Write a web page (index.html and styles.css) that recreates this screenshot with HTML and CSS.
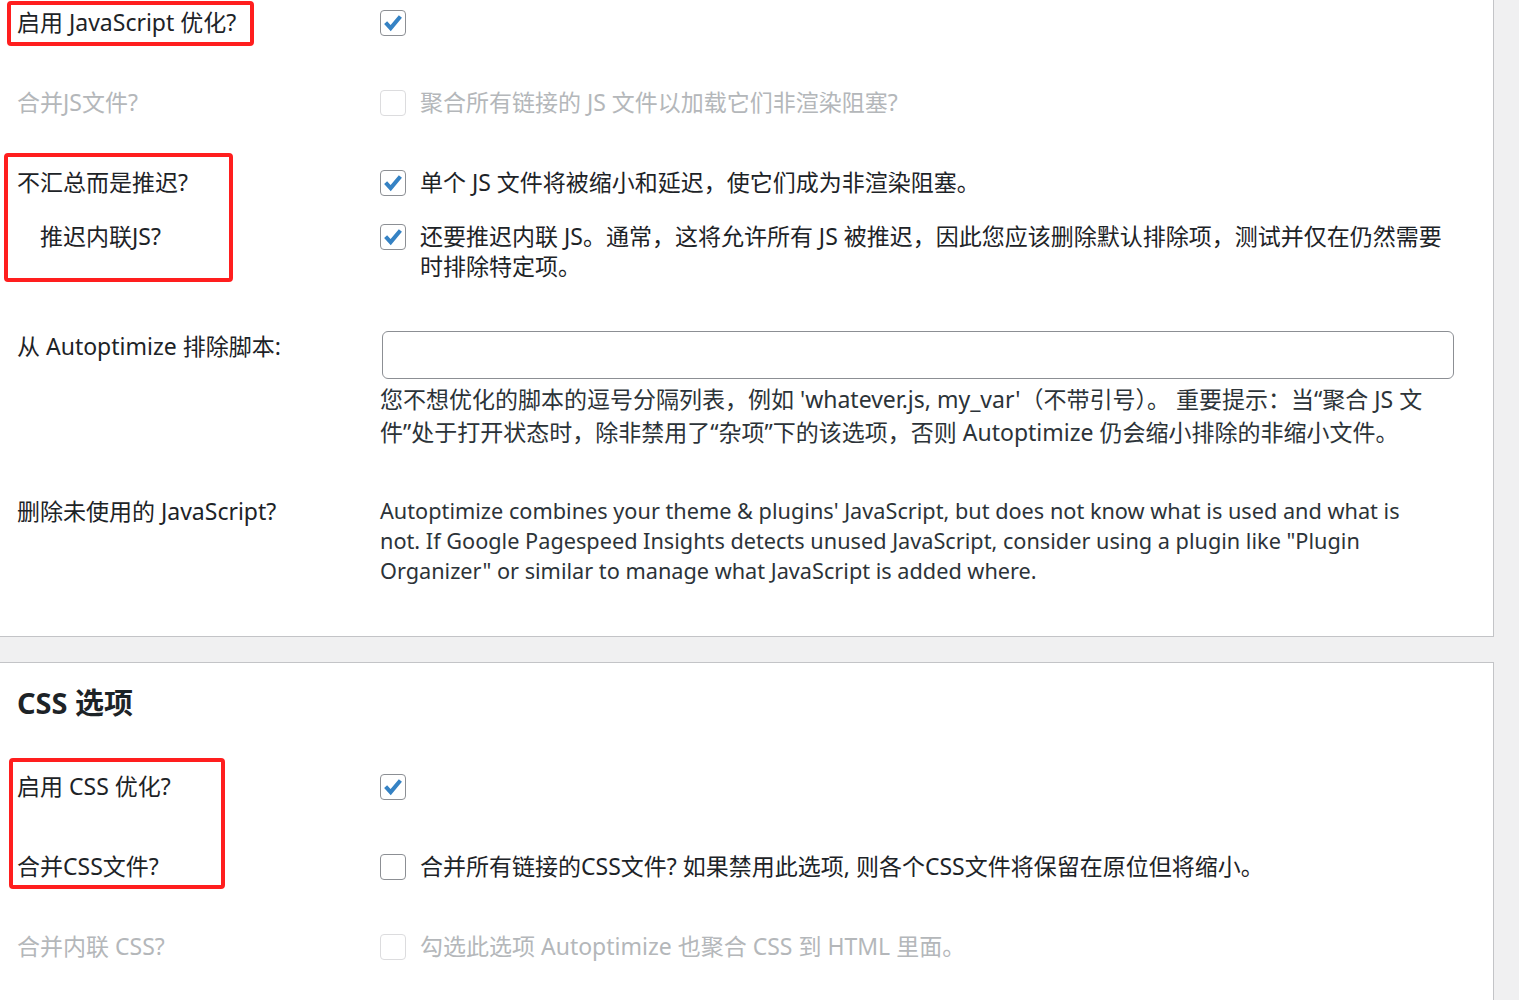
FILE: index.html
```html
<!DOCTYPE html>
<html lang="zh-CN">
<head>
<meta charset="utf-8">
<title>Autoptimize 设置</title>
<link rel="stylesheet" href="styles.css">
</head>
<body>
<div class="page">
  <section class="panel panel-js">
    <div class="row">
      <div class="label">启用 JavaScript 优化?</div>
      <div class="field">
        <span class="cb checked"><svg viewBox="0 0 26 26" width="26" height="26"><polyline points="5,12.5 10.5,18.5 21,6" /></svg></span>
      </div>
    </div>
    <div class="row disabled">
      <div class="label">合并JS文件?</div>
      <div class="field">
        <span class="cb"></span>
        <span class="cb-text">聚合所有链接的 JS 文件以加载它们非渲染阻塞?</span>
      </div>
    </div>
    <div class="row">
      <div class="label">不汇总而是推迟?</div>
      <div class="field">
        <span class="cb checked"><svg viewBox="0 0 26 26" width="26" height="26"><polyline points="5,12.5 10.5,18.5 21,6" /></svg></span>
        <span class="cb-text">单个 JS 文件将被缩小和延迟，使它们成为非渲染阻塞。</span>
      </div>
    </div>
    <div class="row sub">
      <div class="label indent">推迟内联JS?</div>
      <div class="field">
        <span class="cb checked"><svg viewBox="0 0 26 26" width="26" height="26"><polyline points="5,12.5 10.5,18.5 21,6" /></svg></span>
        <span class="cb-text">还要推迟内联 JS。通常，这将允许所有 JS 被推迟，因此您应该删除默认排除项，测试并仅在仍然需要<br>时排除特定项。</span>
      </div>
    </div>
    <div class="row">
      <div class="label">从 Autoptimize 排除脚本:</div>
      <div class="field column">
        <input class="text-input" type="text" value="">
        <p class="desc">您不想优化的脚本的逗号分隔列表，例如 'whatever.js, my_var'（不带引号）。 重要提示：当“聚合 JS 文<br>件”处于打开状态时，除非禁用了“杂项”下的该选项，否则 Autoptimize 仍会缩小排除的非缩小文件。</p>
      </div>
    </div>
    <div class="row after-desc">
      <div class="label">删除未使用的 JavaScript?</div>
      <div class="field">
        <p class="note">Autoptimize combines your theme &amp; plugins' JavaScript, but does not know what is used and what is<br>not. If Google Pagespeed Insights detects unused JavaScript, consider using a plugin like "Plugin<br>Organizer" or similar to manage what JavaScript is added where.</p>
      </div>
    </div>

    <div class="mark mark-1"></div>
    <div class="mark mark-2"></div>
  </section>

  <section class="panel panel-css">
    <h2 class="section-title">CSS 选项</h2>
    <div class="row first">
      <div class="label">启用 CSS 优化?</div>
      <div class="field">
        <span class="cb checked"><svg viewBox="0 0 26 26" width="26" height="26"><polyline points="5,12.5 10.5,18.5 21,6" /></svg></span>
      </div>
    </div>
    <div class="row">
      <div class="label">合并CSS文件?</div>
      <div class="field">
        <span class="cb"></span>
        <span class="cb-text">合并所有链接的CSS文件? 如果禁用此选项, 则各个CSS文件将保留在原位但将缩小。</span>
      </div>
    </div>
    <div class="row disabled">
      <div class="label">合并内联 CSS?</div>
      <div class="field">
        <span class="cb"></span>
        <span class="cb-text">勾选此选项 Autoptimize 也聚合 CSS 到 HTML 里面。</span>
      </div>
    </div>

    <div class="mark mark-3"></div>
  </section>
</div>
</body>
</html>
```

FILE: styles.css
```css
html, body {
  margin: 0;
  padding: 0;
}

body {
  background: #f0f0f1;
  font-family: "Noto Sans", "Noto Sans CJK SC", sans-serif;
  font-size: 23px;
  line-height: 30px;
  color: #1d2327;
}

.page {
  width: 1494px;
}

.panel {
  position: relative;
  background: #fff;
  border-right: 1px solid #c3c4c7;
  padding: 0 39px 0 17px;
}

.panel-js {
  padding-top: 7px;
  padding-bottom: 50px;
  border-bottom: 1px solid #c3c4c7;
}

.panel-css {
  margin-top: 25px;
  border-top: 1px solid #c3c4c7;
  padding-top: 20px;
  padding-bottom: 40px;
}

.row {
  display: grid;
  grid-template-columns: 363px 1fr;
}

.row + .row {
  margin-top: 50px;
}

.row.sub {
  margin-top: 24px;
}

.row.after-desc {
  margin-top: 47px;
}

.row.first {
  margin-top: 48px;
}

.label {
  white-space: nowrap;
}

.label.indent {
  padding-left: 23px;
}

.field {
  display: flex;
  align-items: flex-start;
  min-width: 0;
}

.field.column {
  flex-direction: column;
  align-items: stretch;
}

.cb {
  flex: none;
  width: 26px;
  height: 26px;
  margin-top: 3px;
  box-sizing: border-box;
  border: 1px solid #8c8f94;
  border-radius: 4px;
  background: #fff;
  display: flex;
  align-items: center;
  justify-content: center;
}

.cb svg {
  display: block;
  fill: none;
  stroke: #3582c4;
  stroke-width: 4.4;
  stroke-linejoin: miter;
  stroke-linecap: butt;
}

.cb-text {
  margin-left: 14px;
  white-space: nowrap;
}

.disabled .label,
.disabled .cb-text {
  color: #b4b7ba;
}

.disabled .cb {
  border-color: #dcdcde;
}

.text-input {
  display: block;
  box-sizing: border-box;
  margin: 0 0 0 2px;
  width: calc(100% - 2px);
  height: 48px;
  border: 1px solid #8c8f94;
  border-radius: 6px;
  background: #fff;
  font: inherit;
  padding: 0 12px;
  outline: none;
}

.desc {
  margin: 4px 0 0;
  line-height: 33px;
  color: #2c3338;
  white-space: nowrap;
}

.note {
  margin: 0;
  font-size: 21.7px;
  color: #2c3338;
  white-space: nowrap;
}

.section-title {
  margin: 0;
  font-size: 29px;
  line-height: 40px;
  font-weight: 700;
  color: #1d2327;
}

.mark {
  position: absolute;
  box-sizing: border-box;
  border: 4px solid #ff1e1e;
  border-radius: 4px;
  pointer-events: none;
}

.mark-1 {
  left: 7px;
  top: 1px;
  width: 247px;
  height: 45px;
}

.mark-2 {
  left: 4px;
  top: 153px;
  width: 229px;
  height: 129px;
}

.mark-3 {
  left: 9px;
  top: 95px;
  width: 216px;
  height: 131px;
}
```
